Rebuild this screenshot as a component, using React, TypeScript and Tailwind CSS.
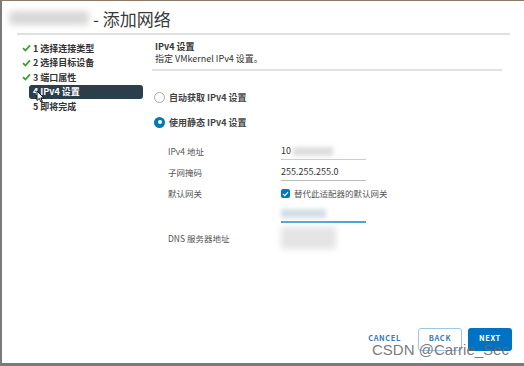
import React from "react";

const font = { fontFamily: '"Noto Sans CJK SC", "Noto Sans", sans-serif' };

function Check() {
  return (
    <svg width="9" height="8" viewBox="0 0 9 8" className="shrink-0">
      <path d="M1 4.2 L3.4 6.5 L8 1.3" fill="none" stroke="#3f9c35" strokeWidth="1.8" />
    </svg>
  );
}

function NavItem({ done, label, active }: { done?: boolean; label: string; active?: boolean }) {
  if (active) {
    return (
      <div className="ml-[9px] w-[114px] h-[14.5px] rounded-[3px] bg-[#2b3e4c] text-white text-[9px] leading-[14.5px] pl-[4px] font-semibold">
        {label}
      </div>
    );
  }
  return (
    <div className="flex items-center h-[14.5px] text-[9px] text-[#333] font-semibold">
      <div className="w-[13px] pl-[2px] flex items-center">{done ? <Check /> : null}</div>
      <span>{label}</span>
    </div>
  );
}

function Radio({ checked, label }: { checked?: boolean; label: string }) {
  return (
    <div className="flex items-center gap-[4px] text-[9px] text-[#444] font-semibold">
      {checked ? (
        <div className="w-[11px] h-[11px] rounded-full bg-[#0079b8] flex items-center justify-center">
          <div className="w-[4px] h-[4px] rounded-full bg-white" />
        </div>
      ) : (
        <div className="w-[11px] h-[11px] rounded-full border border-[#aaa] bg-white" />
      )}
      <span>{label}</span>
    </div>
  );
}

export default function App() {
  return (
    <div className="w-[524px] h-[366px] bg-white relative overflow-hidden" style={font}>
      <div className="h-[1px] bg-[#8a7a6a]" />
      <div className="h-[365px] border-l-[2px] border-b-[3px] border-[#7a7a7a] flex flex-col">
        {/* Title */}
        <div className="flex items-center h-[32px] pl-[7px] pt-[2px]">
          <div className="w-[80px] h-[14px] bg-[#d8d8d8] rounded-sm blur-[3px]" />
          <span className="ml-[4px] text-[17px] text-[#3a3a3a] leading-none">- 添加网络</span>
        </div>
        <div className="ml-[15px] w-[493px] h-[2px] bg-[#e0e0e0]" />
        <div className="flex flex-1">
          {/* Nav */}
          <div className="w-[150px] pl-[18px] pt-[6px] flex flex-col">
            <NavItem done label="1 选择连接类型" />
            <NavItem done label="2 选择目标设备" />
            <NavItem done label="3 端口属性" />
            <NavItem active label="4 IPv4 设置" />
            <NavItem label="5 即将完成" />
          </div>
          {/* Content */}
          <div className="flex-1 flex flex-col pt-[6px] relative">
            <div className="pl-[3px] text-[9px] text-[#333] leading-[12px] font-semibold">IPv4 设置</div>
            <div className="pl-[3px] text-[9px] text-[#333] leading-[12px]">指定 VMkernel IPv4 设置。</div>
            <div className="mt-[4px] w-[350px] h-[2px] bg-[#e2e2e2]" />
            <div className="pl-[2px] mt-[20px] flex flex-col gap-[11px]">
              <Radio label="自动获取 IPv4 设置" />
              <Radio checked label="使用静态 IPv4 设置" />
            </div>
            <div className="mt-[12px] pl-[16px] flex flex-col text-[8.5px] text-[#555]">
              <div className="flex items-center h-[21px]">
                <span className="w-[113px]">IPv4 地址</span>
                <div className="w-[85px] h-[16px] border-b border-[#ccc] flex items-center text-[#333] text-[9px]">
                  <span>10</span>
                  <div className="ml-[2px] w-[40px] h-[9px] bg-[#ddd] blur-[2px]" />
                </div>
              </div>
              <div className="flex items-center h-[21px]">
                <span className="w-[113px]">子网掩码</span>
                <div className="w-[85px] h-[16px] border-b border-[#bbb] flex items-center text-[#333] text-[9px]">
                  255.255.255.0
                </div>
              </div>
              <div className="flex items-center h-[21px]">
                <span className="w-[113px]">默认网关</span>
                <div className="flex items-center gap-[4px] text-[#555]">
                  <div className="w-[9px] h-[9px] rounded-[2px] bg-[#0079b8] flex items-center justify-center">
                    <svg width="7" height="6" viewBox="0 0 7 6">
                      <path d="M1 3 L2.8 4.7 L6 1.2" fill="none" stroke="white" strokeWidth="1.2" />
                    </svg>
                  </div>
                  <span>替代此适配器的默认网关</span>
                </div>
              </div>
              <div className="flex items-center h-[21px]">
                <span className="w-[113px]" />
                <div className="w-[85px] h-[16px] border-b-[2px] border-[#4fa3d8] flex items-center">
                  <div className="w-[45px] h-[9px] bg-[#d4dde6] blur-[2px]" />
                </div>
              </div>
              <div className="flex items-center h-[26px]">
                <span className="w-[113px]">DNS 服务器地址</span>
                <div className="w-[55px] h-[22px] bg-[#e4e4e4] blur-[3px]" />
              </div>
            </div>
          </div>
        </div>
        {/* Footer */}
        <div className="flex items-center justify-end gap-[6px] pr-[12px] pb-[12px]">
          <button className="h-[23px] px-[6px] mr-[5px] pb-[4px] text-[7.5px] tracking-[0.08em] font-bold text-[#3b7ab5]">CANCEL</button>
          <button className="w-[44px] h-[23px] pb-[3px] border border-[#9cc6e4] rounded-[3px] text-[7.5px] tracking-[0.08em] font-bold text-[#3b7ab5] bg-white">BACK</button>
          <button className="w-[44px] h-[23px] pb-[3px] rounded-[3px] bg-[#0072c3] text-[7.5px] tracking-[0.08em] font-bold text-white">NEXT</button>
        </div>
      </div>
      {/* cursor */}
      <svg className="absolute left-[36px] top-[90px]" width="9" height="13" viewBox="0 0 9 13">
        <path d="M1 1 L1 10.5 L3.3 8.4 L5 12 L6.4 11.4 L4.8 7.9 L7.8 7.9 Z" fill="white" stroke="#111" strokeWidth="1" />
      </svg>
      {/* watermark */}
      <div
        className="absolute left-[372px] top-[342px] text-[15px] text-[#6a6a6a]/90 leading-none"
        style={{ fontFamily: '"Liberation Sans", Arial, sans-serif' }}
      >
        CSDN @Carrie_Sec
      </div>
    </div>
  );
}
